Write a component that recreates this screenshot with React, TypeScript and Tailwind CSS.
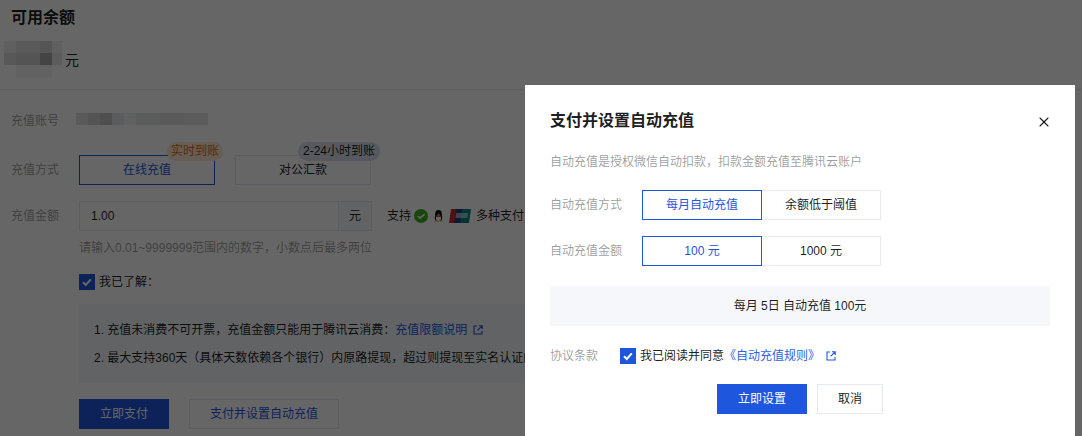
import { X } from "lucide-react";

const amountBlur = [
  ["#ededed", "#e1e1e1", "#e1e1e1", "#d4d4d4", "#f0f0f0"],
  ["#dcdcdc", "#d2d2d2", "#d2d2d2", "#aaaaaa", "#e6e6e6"],
  ["#ffffff", "#f5f5f5", "#f5f5f5", "#f5f5f5", "#ffffff"],
];

const accountBlur = [
  "#e1e1e1", "#d2d2d2", "#c6c6c6", "#e4e6ea", "#f2f2f2", "#e4e6e6", "#e4e6e6", "#e1e1e1", "#e1e1e1", "#e6e6e6", "#e6e6e6",
];

const Blur = () => (
  <svg width="58" height="36" className="block">
    {amountBlur.map((row, y) =>
      row.map((color, x) => <rect key={`${x}-${y}`} x={x * 12} y={y * 12} width="12" height="12" fill={color} />)
    )}
  </svg>
);

const JumpIcon = () => (
  <svg width="12" height="12" viewBox="0 0 12 12" fill="none" stroke="currentColor" strokeWidth="1.1" className="shrink-0">
    <path d="M5 2H2v8h8V7" />
    <path d="M7 1.800h3.200V5M10 2 5.600 6.400" />
  </svg>
);

const CheckBox = () => (
  <span className="flex h-4 w-4 shrink-0 items-center justify-center bg-[#1f56de]">
    <svg width="12" height="12" viewBox="0 0 12 12" fill="none" stroke="#fff" strokeWidth="2">
      <path d="M2 6.200 4.800 9l5-5.600" />
    </svg>
  </span>
);

const PayIcons = () => (
  <div className="mx-[3px] flex items-center">
    <svg width="14" height="14" viewBox="0 0 14 14">
      <circle cx="7" cy="7" r="7" fill="#3fae1c" />
      <path d="M3.600 7 6 9l4.600-3.600" fill="none" stroke="#fff" strokeWidth="1.600" />
    </svg>
    <svg width="11" height="14" viewBox="0 0 13 15" className="ml-[5px]">
      <ellipse cx="6.500" cy="5.500" rx="4" ry="5.200" fill="#111" />
      <ellipse cx="6.500" cy="9.500" rx="4.400" ry="4.200" fill="#111" />
      <ellipse cx="6.500" cy="10" rx="3" ry="3.400" fill="#fff" />
      <path d="M3 7.200h7l-.6 1.600H3.600z" fill="#e0322b" />
      <path d="M4.400 6 6.500 4.600 8.600 6z" fill="#f2b01e" />
      <path d="M1.500 14h4l-1-1.600H2.400zM7.500 14h4l-.9-1.600H8.500z" fill="#f2b01e" />
    </svg>
    <svg width="22" height="14" viewBox="0 0 22 14" className="ml-[5px]">
      <path d="M2 0h7L7 14H0z" fill="#d8262c" />
      <path d="M7 0h8l-2 14H5z" fill="#1c3f80" />
      <path d="M13 0h9l-2 14h-9z" fill="#0f7f86" />
      <path d="M7 4h12l-.5 5H6.500z" fill="#ffffff" opacity="0.55" />
    </svg>
  </div>
);

const App = () => {
  return (
    <div className="relative h-[436px] w-[1082px] overflow-hidden bg-white font-['Liberation_Sans','Noto_Sans_CJK_SC',sans-serif] text-xs text-black/90">
      {/* Page behind the dialog */}
      <div className="h-[90px] border-b border-[#e8e8e8]">
        <div className="pl-[11px] pt-[6px] text-base leading-6 font-bold">可用余额</div>
        <div className="mt-[11px] flex h-9 items-end pl-1">
          <Blur />
          <span className="mb-[7px] ml-[3px] text-sm leading-5">元</span>
        </div>
      </div>

      <div className="pl-[11px]">
        <div className="mt-[23px] flex h-3 items-center">
          <span className="w-[65px] pt-[4px] text-black/40">充值账号</span>
          <div className="flex">
            {accountBlur.map((color, i) => (
              <span key={i} className="h-3 w-3" style={{ background: color }} />
            ))}
          </div>
        </div>

        <div className="mt-[30px] flex h-[30px] items-center">
          <span className="w-[68px] text-black/40">充值方式</span>
          <div className="relative flex h-[30px] w-[136px] items-center justify-center border border-[#1f56de] text-[#1f56de]">
            在线充值
            <span className="absolute -top-[14px] left-[87px] rounded-full bg-[#ffe8d2] px-[4px] leading-[19px] whitespace-nowrap text-[#e0701b]">
              实时到账
            </span>
          </div>
          <div className="relative ml-5 flex h-[30px] w-[136px] items-center justify-center border border-[#e6e9f2]">
            对公汇款
            <span className="absolute -top-[14px] left-[62px] rounded-full bg-[#dcdfee] px-[5px] leading-[19px] whitespace-nowrap">
              2-24小时到账
            </span>
          </div>
        </div>

        <div className="mt-4 flex h-[30px] items-center">
          <span className="w-[68px] text-black/40">充值金额</span>
          <div className="flex h-[30px] w-[293px] border border-[#e6e9f2]">
            <span className="flex-1 pl-[11px] leading-7">1.00</span>
            <span className="flex w-[33px] items-center justify-center border-l border-[#e6e9f2] bg-[#f6f7fb]">元</span>
          </div>
          <span className="ml-[15px]">支持</span>
          <PayIcons />
          <span className="ml-[2px] whitespace-nowrap">多种支付方式</span>
        </div>

        <div className="mt-2 ml-[68px] leading-[18px] text-black/40">请输入0.01~9999999范围内的数字，小数点后最多两位</div>

        <div className="mt-4 ml-[68px] flex h-[17px] items-center gap-[4px]">
          <CheckBox />
          <span>我已了解：</span>
        </div>

        <div className="mt-[14px] ml-[68px] h-[79px] w-[446px] overflow-hidden bg-[#f6f7fb] pt-4 pl-[15px] whitespace-nowrap">
          <div className="flex h-5 items-center">
            1. 充值未消费不可开票，充值金额只能用于腾讯云消费：
            <span className="text-[#1f56de]">充值限额说明</span>
            <span className="ml-[5px] text-[#1f56de]">
              <JumpIcon />
            </span>
          </div>
          <div className="mt-2 flex h-5 items-center">2. 最大支持360天（具体天数依赖各个银行）内原路提现，超过则提现至实名认证的</div>
        </div>

        <div className="mt-4 ml-[68px] flex gap-5">
          <button className="h-[30px] w-[90px] bg-[#1f56de] text-white">立即支付</button>
          <button className="h-[30px] w-[150px] border border-[#e6e9f2] text-[#1f56de]">支付并设置自动充值</button>
        </div>
      </div>

      {/* Overlay */}
      <div className="absolute inset-0 bg-black/60" />

      {/* Dialog */}
      <div className="absolute top-[85px] left-[525px] h-[351px] w-[550px] bg-white px-[25px] pt-6">
        <button className="absolute top-[29px] left-[511px] text-black/90">
          <X size={16} strokeWidth={1.6} />
        </button>
        <div className="text-base leading-6 font-bold">支付并设置自动充值</div>
        <div className="mt-5 leading-[18px] text-black/40">自动充值是授权微信自动扣款，扣款金额充值至腾讯云账户</div>

        <div className="mt-[19px] flex h-[30px] items-center">
          <span className="w-[92px] text-black/40">自动充值方式</span>
          <div className="flex h-[30px] w-[120px] items-center justify-center border border-[#1f56de] text-[#1f56de]">每月自动充值</div>
          <div className="flex h-[30px] w-[119px] items-center justify-center border border-l-0 border-[#e6e9f2]">余额低于阈值</div>
        </div>
        <div className="mt-4 flex h-[30px] items-center">
          <span className="w-[92px] text-black/40">自动充值金额</span>
          <div className="flex h-[30px] w-[120px] items-center justify-center border border-[#1f56de] text-[#1f56de]">100 元</div>
          <div className="flex h-[30px] w-[119px] items-center justify-center border border-l-0 border-[#e6e9f2]">1000 元</div>
        </div>

        <div className="mt-5 flex h-10 items-center justify-center bg-[#f6f7fb]">每月 5日 自动充值 100元</div>

        <div className="mt-5 flex h-5 items-center">
          <span className="w-[70px] text-black/40">协议条款</span>
          <CheckBox />
          <span className="ml-[4px]">我已阅读并同意</span>
          <span className="text-[#2b62e3]">《自动充值规则》</span>
          <span className="ml-[5px] text-[#1f56de]">
            <JumpIcon />
          </span>
        </div>

        <div className="mt-[18px] flex justify-center gap-[10px]">
          <button className="h-[30px] w-[90px] bg-[#1f56de] text-white">立即设置</button>
          <button className="h-[30px] w-[66px] border border-[#e6e9f2]">取消</button>
        </div>
      </div>
    </div>
  );
};

export default App;
